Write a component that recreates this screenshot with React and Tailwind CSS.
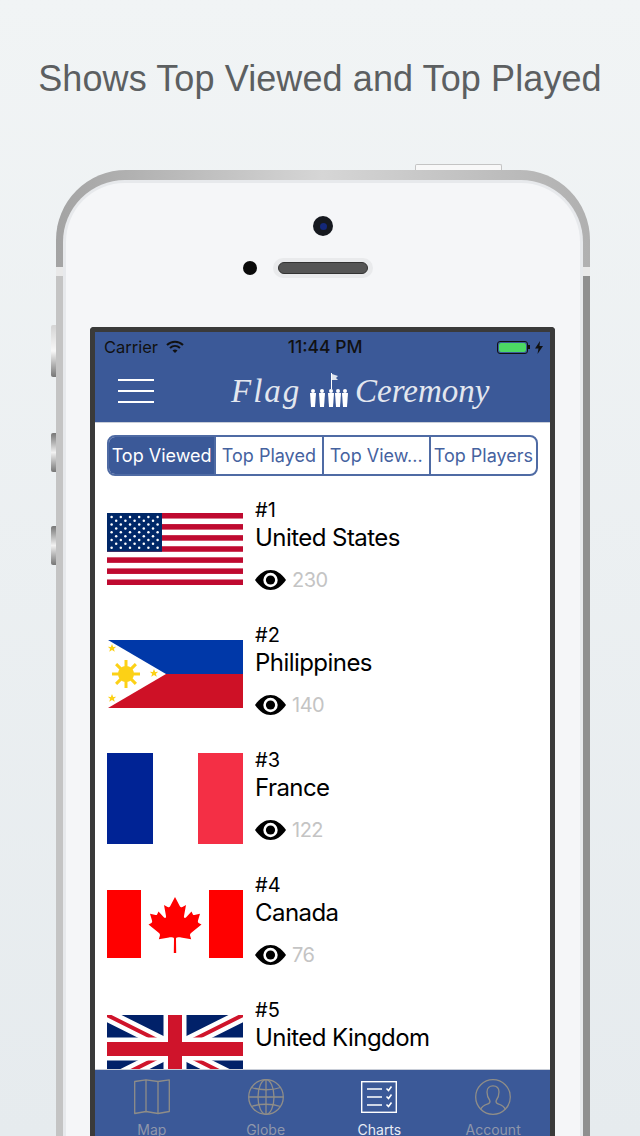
import React from 'react'

const uiFont = { fontFamily: 'Inter, "Noto Sans", sans-serif' }

const UsFlag = () => {
  const stars = []
  for (let r = 0; r < 9; r++) {
    const n = r % 2 === 0 ? 6 : 5
    for (let c = 0; c < n; c++) {
      stars.push(<circle key={`${r}-${c}`} cx={(r % 2 === 0 ? 4.6 : 9.2) + c * 9.2} cy={3.9 + r * 3.85} r="1.25" fill="#fff" />)
    }
  }
  return (
    <svg width="136" height="72" viewBox="0 0 136 72" className="block">
      <rect width="136" height="72" fill="#fff" />
      {[0, 1, 2, 3, 4, 5, 6].map((i) => (
        <rect key={i} y={i * 11.08} width="136" height="5.54" fill="#bf0a30" />
      ))}
      <rect width="55" height="38.7" fill="#002868" />
      {stars}
    </svg>
  )
}

const phStar = 'l1.2 3 3-.2-2.3 2 .8 3-2.7-1.7-2.7 1.7.8-3-2.3-2 3 .2z'

const PhFlag = () => (
  <svg width="136" height="68" viewBox="0 0 136 68" className="block">
    <rect x="1" width="135" height="34" fill="#0038a8" />
    <rect x="1" y="34" width="135" height="34" fill="#ce1126" />
    <path d="M1 0 L59 34 L1 68 Z" fill="#fff" />
    <g stroke="#fcd116" strokeWidth="3">
      {[0, 45, 90, 135].map((a) => (
        <line key={a} x1="5" y1="34" x2="33" y2="34" transform={`rotate(${a} 19 34)`} />
      ))}
    </g>
    <circle cx="19" cy="34" r="8" fill="#fcd116" />
    <path d={`M5 4 ${phStar}`} fill="#fcd116" />
    <path d={`M5 54 ${phStar}`} fill="#fcd116" />
    <path d={`M47 29 ${phStar}`} fill="#fcd116" />
  </svg>
)

const FrFlag = () => (
  <div className="flex w-[136px] h-[91px]">
    <div className="w-[46px] bg-[#002395]" />
    <div className="w-[45px] bg-white" />
    <div className="w-[45px] bg-[#f42f45]" />
  </div>
)

const CaFlag = () => (
  <svg width="136" height="68" viewBox="0 0 136 68" className="block">
    <rect width="136" height="68" fill="#fff" />
    <rect width="34" height="68" fill="#ff0000" />
    <rect x="102" width="34" height="68" fill="#ff0000" />
    <path
      d="M68 7 L73 16.5 C73.6 17.5 74.5 17.4 75.4 16.9 L79 15 L77 26 C76.6 28 78 28.6 79.2 27.3 L84.5 21.6 L85.9 24.4 C86.2 25 86.8 25 87.4 24.9 L93 23.7 L91 30.5 C90.6 32 91 32.8 92 33.3 L94.5 34.5 L84 43 C83 43.9 82.8 44.8 83.2 46 L84.2 49.2 L74 47.4 C72.6 47.2 69.3 47.1 69 48.4 L69.2 63 L66.8 63 L67 48.4 C66.7 47.1 63.4 47.2 62 47.4 L51.8 49.2 L52.8 46 C53.2 44.8 53 43.9 52 43 L41.5 34.5 L44 33.3 C45 32.8 45.4 32 45 30.5 L43 23.7 L48.6 24.9 C49.2 25 49.8 25 50.1 24.4 L51.5 21.6 L56.8 27.3 C58 28.6 59.4 28 59 26 L57 15 L60.6 16.9 C61.5 17.4 62.4 17.5 63 16.5 Z"
      fill="#ff0000"
    />
  </svg>
)

const UkFlag = () => (
  <svg width="136" height="68" viewBox="0 0 136 68" className="block">
    <rect width="136" height="68" fill="#012169" />
    <path d="M0 0 L136 68 M136 0 L0 68" stroke="#fff" strokeWidth="13" />
    <path d="M0 0 L68 34 M136 68 L68 34" stroke="#cf142b" strokeWidth="4" />
    <path d="M136 0 L68 34 M0 68 L68 34" stroke="#cf142b" strokeWidth="4" />
    <path d="M68 0 V68 M0 34 H136" stroke="#fff" strokeWidth="23" />
    <path d="M68 0 V68 M0 34 H136" stroke="#cf142b" strokeWidth="14" />
  </svg>
)

const Eye = () => (
  <svg width="31" height="20" viewBox="0 0 31 20" className="block">
    <path d="M0 10 C5 3 10 0 15.5 0 C21 0 26 3 31 10 C26 17 21 20 15.5 20 C10 20 5 17 0 10 Z" fill="#000" />
    <circle cx="15.5" cy="10" r="7.2" fill="#fff" />
    <circle cx="15.5" cy="10" r="4.6" fill="#000" />
  </svg>
)

const MapIcon = () => (
  <svg width="36" height="36" viewBox="0 0 36 36" fill="none" stroke="#8f8d88" strokeWidth="1.3" strokeLinejoin="round">
    <path d="M0.7 2.5 L12 0.8 L24 2.5 L35.3 0.8 V32.5 L24 34.5 L12 32.5 L0.7 34.5 Z" />
    <path d="M12 0.8 V32.5 M24 2.5 V34.5" />
  </svg>
)

const GlobeIcon = () => (
  <svg width="36" height="36" viewBox="0 0 36 36" fill="none" stroke="#8f8d88" strokeWidth="1.3">
    <circle cx="18" cy="18" r="17.3" />
    <ellipse cx="18" cy="18" rx="8" ry="17.3" />
    <path d="M18 0.7 V35.3 M0.7 18 H35.3" />
    <path d="M3.5 8.5 C12 11.5 24 11.5 32.5 8.5 M3.5 27.5 C12 24.5 24 24.5 32.5 27.5" />
  </svg>
)

const ChartsIcon = () => (
  <svg width="36" height="32" viewBox="0 0 36 32" fill="none" stroke="#fff" strokeWidth="1.4">
    <rect x="0.7" y="0.7" width="34.6" height="30.6" />
    <path d="M6 8 H21 M6 16 H21 M6 24 H21" />
    <path d="M25.5 7.5 L27.5 9.5 L30.5 5.5 M25.5 15.5 L27.5 17.5 L30.5 13.5 M25.5 23.5 L27.5 25.5 L30.5 21.5" strokeWidth="1.6" />
  </svg>
)

const AccountIcon = () => (
  <svg width="36" height="36" viewBox="0 0 36 36" fill="none" stroke="#8f8d88" strokeWidth="1.3">
    <circle cx="18" cy="18" r="17.3" />
    <path d="M5.8 30.5 C6.5 27 9.5 26 13 24.8 C15 24 15.3 23 14.8 21.5 C12.8 19 12 16 12 13 C12 9 14.5 6.8 18 6.8 C21.5 6.8 24 9 24 13 C24 16 23.2 19 21.2 21.5 C20.7 23 21 24 23 24.8 C26.5 26 29.5 27 30.2 30.5" />
  </svg>
)

const countries = [
  { rank: '#1', name: 'United States', count: 230, flag: <UsFlag /> },
  { rank: '#2', name: 'Philippines', count: 140, flag: <PhFlag /> },
  { rank: '#3', name: 'France', count: 122, flag: <FrFlag /> },
  { rank: '#4', name: 'Canada', count: 76, flag: <CaFlag /> },
  { rank: '#5', name: 'United Kingdom', count: 71, flag: <UkFlag /> },
]

const tabs = ['Top Viewed', 'Top Played', 'Top View...', 'Top Players']

const bottomTabs = [
  { label: 'Map', icon: <MapIcon /> },
  { label: 'Globe', icon: <GlobeIcon /> },
  { label: 'Charts', icon: <ChartsIcon />, active: true },
  { label: 'Account', icon: <AccountIcon /> },
]

const SideButton = ({ className }) => (
  <div className={`absolute left-[-5px] w-[5px] rounded-l-[2px] bg-gradient-to-b from-[#777777] via-[#f2f2f2] to-[#777777] ${className}`} />
)

const StatusBar = () => (
  <div className="h-[32px] flex items-center text-[16.5px] text-[#111] pl-[9px] pr-[7px] pb-[2px]">
    <span>Carrier</span>
    <svg width="18" height="14" viewBox="0 0 18 14" className="ml-[8px]" fill="none" stroke="#111" strokeWidth="2">
      <path d="M1 5 C5.5 0.5 12.5 0.5 17 5" />
      <path d="M4 8 C7 5.2 11 5.2 14 8" />
      <path d="M9 13 L6.5 10.5 C8 9.3 10 9.3 11.5 10.5 Z" fill="#111" stroke="none" />
    </svg>
    <span className="ml-[102px] w-[78px] text-center font-medium text-[17.5px] whitespace-nowrap">11:44 PM</span>
    <div className="ml-auto flex items-center">
      <div className="w-[31px] h-[13px] rounded-[3px] border border-[#111] p-[1px]">
        <div className="w-full h-full rounded-[2px] bg-[#4cd964]" />
      </div>
      <div className="w-[2px] h-[4px] bg-[#111] mr-[5px]" />
      <svg width="8" height="13" viewBox="0 0 8 13">
        <path d="M5 0 L0 7.5 H3.5 L2.5 13 L8 5 H4.5 Z" fill="#111" />
      </svg>
    </div>
  </div>
)

const FigureGroup = () => (
  <svg width="38" height="36" viewBox="0 0 38 36" fill="#fff">
    <path d="M21 0 H22 V16 H21 Z" />
    <path d="M22 1 L28 3 L26 5 L28 7 L22 7 Z" fill="#dfe4ee" />
    {[3, 12, 21, 28, 35].map((x) => (
      <g key={x}>
        <circle cx={x} cy="18" r="2" />
        <path d={`M${x - 3} 20 H${x + 3} L${x + 2} 34 H${x - 2} Z`} />
      </g>
    ))}
  </svg>
)

const NavBar = () => (
  <div className="h-[59px] flex items-center pl-[23px] border-b border-[#c9ced8]">
    <div className="w-[36px] flex flex-col gap-[9px] mb-[4px]">
      <div className="h-[2px] bg-white" />
      <div className="h-[2px] bg-white" />
      <div className="h-[2px] bg-white" />
    </div>
    <div className="ml-[77px] flex items-center text-[33px] italic text-[#e3e7ef] leading-none mb-[4px]" style={{ fontFamily: '"Liberation Serif", serif' }}>
      <span className="w-[79px] tracking-[2px]">Flag</span>
      <FigureGroup />
      <span className="ml-[7px]">Ceremony</span>
    </div>
  </div>
)

const CountryRow = ({ item }) => (
  <div className="h-[125px] shrink-0 flex items-center pl-[12px]">
    <div className="w-[136px] shrink-0">{item.flag}</div>
    <div className="ml-[12px] mb-[7px] flex flex-col text-black">
      <div className="text-[20px] leading-[24px]">{item.rank}</div>
      <div className="text-[24px] leading-[30px] mt-[1px] tracking-[-0.55px]">{item.name}</div>
      <div className="flex items-center mt-[15px] h-[24px]">
        <Eye />
        <span className="ml-[6px] text-[20px] text-[#c4c4c4] tracking-[-0.5px]">{item.count}</span>
      </div>
    </div>
  </div>
)

export default function App() {
  return (
    <div className="w-[640px] h-[1136px] overflow-hidden bg-gradient-to-b from-[#f1f4f5] to-[#e6ebee]" style={uiFont}>
      <h1
        className="h-[170px] pt-[56px] text-center text-[36px] leading-[46px] font-normal text-[#5c5f61] tracking-[0.1px] whitespace-nowrap"
        style={{ fontFamily: '"Liberation Sans", Arial, sans-serif' }}
      >
        Shows Top Viewed and Top Played
      </h1>

      <div className="relative ml-[56px] w-[534px] h-[1100px] pt-[10px] px-[7px] rounded-t-[70px] bg-gradient-to-r from-[#a3a3a3] via-[#d6d6d6] to-[#b0b0b0]">
        {/* Hardware buttons */}
        <div className="absolute top-[-6px] left-[359px] w-[87px] h-[6px] rounded-t-[2px] border border-b-0 border-[#c4c4c4] bg-[#f8f8f8]" />
        <SideButton className="top-[155px] h-[52px] !from-[#d4d4d4] !via-[#f8f8f8] !to-[#777777]" />
        <SideButton className="top-[263px] h-[39px]" />
        <SideButton className="top-[356px] h-[39px]" />
        <div className="absolute left-0 top-[97px] w-[7px] h-[9px] bg-[#e9e9e9]" />
        <div className="absolute left-0 top-[106px] w-[7px] h-[994px] bg-[#c4c4c4]" />
        <div className="absolute right-0 top-[97px] w-[7px] h-[9px] bg-[#e9e9e9]" />
        <div className="absolute right-0 top-[106px] w-[7px] h-[994px] bg-[#8f8f8f]" />

        <div className="h-full rounded-t-[62px] border-[3px] border-b-0 border-[#e7e9ec] bg-[#f5f6f8]">
          {/* Camera and speaker */}
          <div className="h-[144px] flex flex-col items-center">
            <div className="mt-[33px] w-[20px] h-[20px] rounded-full bg-[#16191f] flex items-center justify-center">
              <div className="w-[7px] h-[7px] rounded-full bg-[#14287a]" />
            </div>
            <div className="mt-[22px] mr-[30px] flex items-center gap-[16px]">
              <div className="w-[14px] h-[14px] rounded-full bg-[#0a0a0a]" />
              <div className="w-[100px] h-[20px] rounded-full bg-[#e9eaec] flex items-center justify-center">
                <div className="w-[90px] h-[12px] rounded-full bg-[#555555] border border-[#333333]" />
              </div>
            </div>
          </div>

          {/* Screen */}
          <div className="ml-[24px] w-[465px] h-[850px] border-[5px] border-b-0 border-[#3a3a3a] rounded-t-[4px] bg-white flex flex-col overflow-hidden">
            <div className="bg-[#3b5998]">
              <StatusBar />
              <NavBar />
            </div>

            <div className="h-[646px] flex flex-col overflow-hidden">
              <div className="mx-[12px] mt-[12px] h-[41px] shrink-0 flex rounded-[8px] border-2 border-[#4f6ba4] overflow-hidden">
                {tabs.map((t, i) => (
                  <div
                    key={t}
                    className={`w-0 flex-1 flex items-center justify-center text-[18px] whitespace-nowrap ${i > 0 ? 'border-l-2 border-[#4f6ba4]' : ''} ${i === 0 ? 'bg-[#3b5998] text-white' : 'text-[#45629f]'}`}
                  >
                    {t}
                  </div>
                ))}
              </div>
              <div className="mt-[10px]">
                {countries.map((c) => (
                  <CountryRow key={c.rank} item={c} />
                ))}
              </div>
            </div>

            <div className="h-[98px] shrink-0 bg-[#3b5998] border-t border-[#c9ced8] flex">
              {bottomTabs.map((t) => (
                <div key={t.label} className="flex-1 flex flex-col items-center">
                  <div className="h-[37px] mt-[8px] flex items-center">{t.icon}</div>
                  <span className={`mt-[6px] text-[14px] leading-[18px] ${t.active ? 'text-[#e8ecf5]' : 'text-[#8f97ab]'}`}>{t.label}</span>
                </div>
              ))}
            </div>
          </div>
        </div>
      </div>
    </div>
  )
}
